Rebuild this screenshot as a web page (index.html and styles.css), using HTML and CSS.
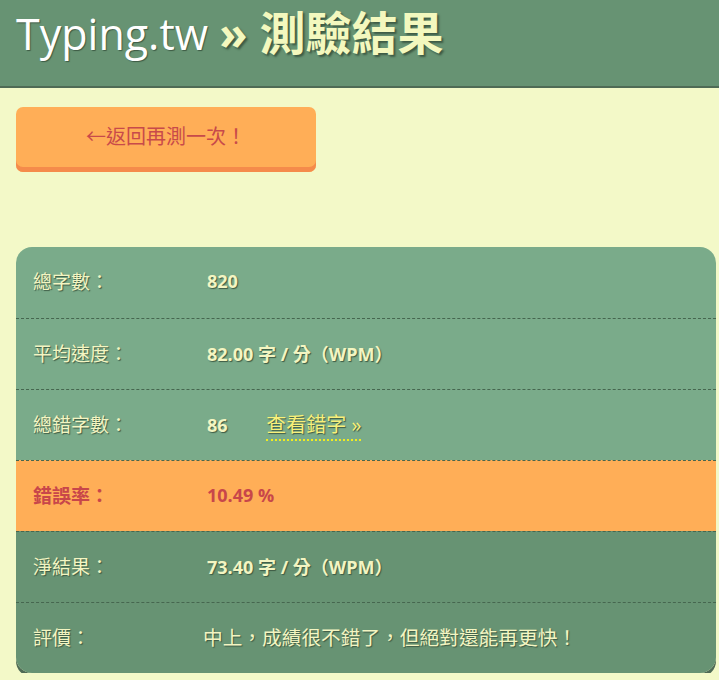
FILE: index.html
```html
<!DOCTYPE html>
<html lang="zh-Hant">
<head>
<meta charset="utf-8">
<title>Typing.tw » 測驗結果</title>
<link rel="stylesheet" href="styles.css">
</head>
<body>
<header class="site-header">
  <h1 class="title"><span class="brand">Typing.tw</span> <span class="sub"><span class="raquo">»</span>測驗結果</span></h1>
</header>
<main class="content">
  <a class="back-btn" href="#">←返回再測一次！</a>
  <div class="results">
    <div class="row light">
      <div class="label">總字數：</div>
      <div class="value">820</div>
    </div>
    <div class="row light">
      <div class="label">平均速度：</div>
      <div class="value">82.00 字 / 分（WPM）</div>
    </div>
    <div class="row light">
      <div class="label">總錯字數：</div>
      <div class="value">86 <a class="view-link" href="#">查看錯字 »</a></div>
    </div>
    <div class="row warn">
      <div class="label">錯誤率：</div>
      <div class="value">10.49 %</div>
    </div>
    <div class="row dark">
      <div class="label">淨結果：</div>
      <div class="value">73.40 字 / 分（WPM）</div>
    </div>
    <div class="row dark last">
      <div class="label">評價：</div>
      <div class="value comment">中上，成績很不錯了，但絕對還能再更快！</div>
    </div>
  </div>
</main>
</body>
</html>
```
FILE: styles.css
```css
* { box-sizing: border-box; }
html, body {
  margin: 0;
  padding: 0;
  background: #f3f9c8;
  font-family: "Open Sans", "Noto Sans CJK TC", sans-serif;
}
.site-header {
  background: #679373;
  height: 88px;
  border-bottom: 2px solid #4f6b55;
  padding: 0 16px;
}
.title {
  margin: 0;
  font-weight: 400;
  font-size: 43px;
  line-height: 64px;
  white-space: nowrap;
}
.brand {
  color: #ffffff;
  text-shadow: 1px 1px 1px #3d5a44;
}
.sub {
  color: #f3f8be;
  font-size: 46px;
  font-weight: 700;
  text-shadow: 2px 2px 2px #3d5a44;
}
.raquo {
  margin-right: 12px;
}
.content {
  padding: 19px 3px 0 16px;
}
.back-btn {
  display: flex;
  align-items: center;
  justify-content: center;
  width: 300px;
  height: 65px;
  padding-bottom: 8px;
  background: #ffae57;
  border-radius: 7px;
  box-shadow: inset 0 -5px 0 #f58b4b;
  color: #c84a4a;
  font-size: 20px;
  text-decoration: none;
}
.results {
  margin-top: 75px;
  border-radius: 16px;
  overflow: hidden;
  box-shadow: 0 4px 0 #4f6b55;
}
.row {
  display: flex;
  align-items: center;
  height: 71px;
  padding-left: 17px;
  border-top: 1px dashed #46664f;
  color: #f3f5c2;
  text-shadow: 1px 1px 1px #3d5a44;
}
.row:first-child { border-top: none; }
.row.light { background: #7aab8a; }
.row.warn { background: #ffae57; color: #c8464a; text-shadow: none; }
.row.warn .label { font-weight: 700; }
.row.dark { background: #679373; }
.label {
  width: 174px;
  font-size: 19px;
  flex: none;
  padding-bottom: 3px;
}
.value {
  font-size: 18px;
  font-weight: 700;
  padding-bottom: 3px;
}
.value.comment {
  margin-left: -4px;
  font-size: 19.7px;
  font-weight: 400;
}
.view-link {
  margin-left: 34px;
  color: #f8f07a;
  font-size: 20px;
  font-weight: 400;
  text-decoration: none;
  border-bottom: 2px dotted #f0ec20;
  padding-bottom: 1px;
}
```
